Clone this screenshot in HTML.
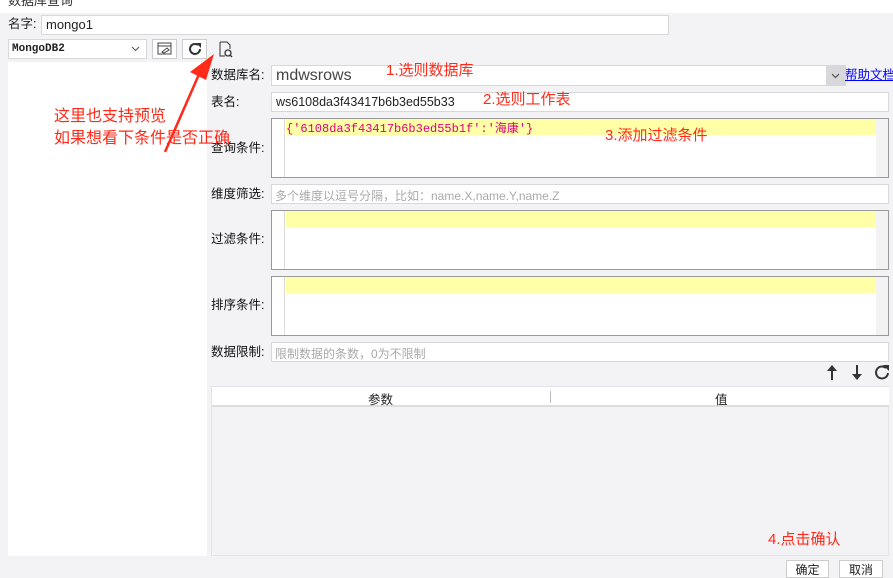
<!DOCTYPE html>
<html><head><meta charset="utf-8"><style>
*{margin:0;padding:0;box-sizing:border-box}
body{width:893px;height:574px;overflow:hidden;background:#f3f3f5;font-family:"Liberation Sans","Noto Sans CJK SC",sans-serif;font-size:12px;color:#222;position:relative}
.a{position:absolute;white-space:nowrap}
.inp{position:absolute;background:#fff;border:1px solid #d8d8d8;white-space:nowrap}
.lbl{position:absolute;left:211px;font-size:12.5px;color:#111;line-height:15px}
.ta{position:absolute;left:271px;width:618px;background:#fff;border:1px solid #999}
.ta .g{position:absolute;left:0;top:0;bottom:0;width:13px;border-right:1px solid #ddd}
.ta .y{position:absolute;left:14px;top:0;right:12px;height:16px;background:#ffffa8}
.ta .sb{position:absolute;right:0;top:0;bottom:0;width:12px;background:#f3f3f3}
.red{position:absolute;color:#ff2a1a;font-size:15px;white-space:nowrap}
.ph{color:#aaa;font-size:12px;padding:2px 3px}
.btn{position:absolute;background:#fff;border:1px solid #ccc;font-size:12px;text-align:center}
</style></head><body>
<div class="a" style="left:0;top:0;width:893px;height:13px;background:#fff"></div>
<div class="a" style="left:8px;top:-10px;font-size:13px;color:#333">数据库查询</div>
<div class="a" style="left:8px;top:17px;font-size:12.5px;line-height:15px">名字:</div>
<div class="inp" style="left:41px;top:15px;width:628px;height:20px;font-size:13px;padding:1px 4px">mongo1</div>
<div class="inp" style="left:8px;top:39px;width:139px;height:20px;font-family:'Liberation Mono',monospace;font-size:11px;font-weight:bold;padding:3px 3px">MongoDB2<svg style="position:absolute;right:6px;top:6px" width="9" height="6" viewBox="0 0 9 6"><path d="M1 1 L4.5 4.5 L8 1" fill="none" stroke="#555"/></svg></div>
<div class="btn" style="left:152px;top:39px;width:25px;height:20px"><svg width="16" height="14" viewBox="0 0 16 14" style="margin-top:2px"><rect x="1" y="1" width="13" height="11" fill="none" stroke="#444"/><line x1="1" y1="4" x2="14" y2="4" stroke="#444"/><path d="M5 10 L10 6 L12 8 L7 11Z" fill="none" stroke="#444"/></svg></div>
<div class="btn" style="left:182px;top:39px;width:25px;height:20px"><svg width="16" height="16" viewBox="0 0 16 16" style="margin-top:1px"><path d="M13 8 A5 5 0 1 1 11 4" fill="none" stroke="#333" stroke-width="2"/><path d="M9 2 L14 2 L14 7Z" fill="#333"/></svg></div>
<svg class="a" style="left:218px;top:41px" width="16" height="17" viewBox="0 0 16 17"><path d="M2 1 H9 L12 4 V8 M2 1 V15 H7" fill="none" stroke="#333"/><circle cx="10" cy="12" r="3" fill="none" stroke="#333" stroke-width="1.3"/><line x1="12" y1="14" x2="14" y2="16" stroke="#333" stroke-width="1.3"/></svg>
<div class="a" style="left:8px;top:62px;width:199px;height:494px;background:#fff"></div>

<div class="lbl" style="top:68px">数据库名:</div>
<div class="inp" style="left:271px;top:65px;width:575px;height:21px;font-size:16px;color:#444;padding:0 4px;line-height:19px">mdwsrows<span style="position:absolute;right:0;top:0;width:19px;height:19px;background:#d8d8dc"><svg style="position:absolute;left:5px;top:7px" width="9" height="6" viewBox="0 0 9 6"><path d="M1 1 L4.5 4.5 L8 1" fill="none" stroke="#444"/></svg></span></div>
<div class="a" style="left:845px;top:68px;color:#00f;text-decoration:underline;font-size:12.5px;line-height:15px">帮助文档</div>
<div class="lbl" style="top:95px">表名:</div>
<div class="inp" style="left:271px;top:92px;width:618px;height:20px;font-size:12.5px;padding:2px 4px">ws6108da3f43417b6b3ed55b33</div>
<div class="lbl" style="top:141px">查询条件:</div>
<div class="ta" style="top:118px;height:60px"><div class="g"></div><div class="y"></div><div class="sb"></div><div class="a" style="left:14px;top:0;color:#e0007a;font-family:'Liberation Mono','Noto Sans CJK SC',monospace;font-size:12px">{'6108da3f43417b6b3ed55b1f':'海康'}</div></div>
<div class="lbl" style="top:187px">维度筛选:</div>
<div class="inp ph" style="left:271px;top:184px;width:618px;height:20px">多个维度以逗号分隔，比如：name.X,name.Y,name.Z</div>
<div class="lbl" style="top:232px">过滤条件:</div>
<div class="ta" style="top:210px;height:60px"><div class="g"></div><div class="y"></div><div class="sb"></div></div>
<div class="lbl" style="top:298px">排序条件:</div>
<div class="ta" style="top:276px;height:60px"><div class="g"></div><div class="y"></div><div class="sb"></div></div>
<div class="lbl" style="top:345px">数据限制:</div>
<div class="inp ph" style="left:271px;top:342px;width:618px;height:20px">限制数据的条数，0为不限制</div>
<svg class="a" style="left:825px;top:364px" width="64" height="17" viewBox="0 0 64 17"><path d="M7 16 V4" stroke="#333" stroke-width="2"/><path d="M2 7 L7 1 L12 7Z" fill="#333"/><path d="M32 1 V13" stroke="#333" stroke-width="2"/><path d="M27 10 L32 16 L37 10Z" fill="#333"/><path d="M63 9 A6 6 0 1 1 61 4" fill="none" stroke="#333" stroke-width="2"/><path d="M58 1 L64 1 L64 7Z" fill="#333"/></svg>
<div class="a" style="left:211px;top:386px;width:678px;height:170px;border:1px solid #e4e4e8;background:#f3f3f5"></div>
<div class="a" style="left:212px;top:387px;width:677px;height:20px;background:#fff;border-bottom:2px solid #ddd"></div>
<div class="a" style="left:368px;top:389px;font-size:12.5px">参数</div>
<div class="a" style="left:550px;top:391px;width:1px;height:12px;background:#bbb"></div>
<div class="a" style="left:715px;top:389px;font-size:12.5px">值</div>
<div class="btn" style="left:786px;top:560px;width:43px;height:18px">确定</div>
<div class="btn" style="left:839px;top:560px;width:44px;height:18px">取消</div>

<div class="red" style="left:386px;top:59px">1.选则数据库</div>
<div class="red" style="left:483px;top:88px">2.选则工作表</div>
<div class="red" style="left:605px;top:124px">3.添加过滤条件</div>
<div class="red" style="left:768px;top:528px">4.点击确认</div>
<div class="red" style="left:54px;top:106px;line-height:22px;font-size:16px">这里也支持预览<br>如果想看下条件是否正确</div>
<svg class="a" style="left:160px;top:50px" width="60" height="105" viewBox="0 0 60 105"><path d="M5 102 L40 22" stroke="#ff2a1a" stroke-width="2.5"/><path d="M54 4 L30 22 L46 30Z" fill="#ff2a1a"/></svg>
</body></html>
